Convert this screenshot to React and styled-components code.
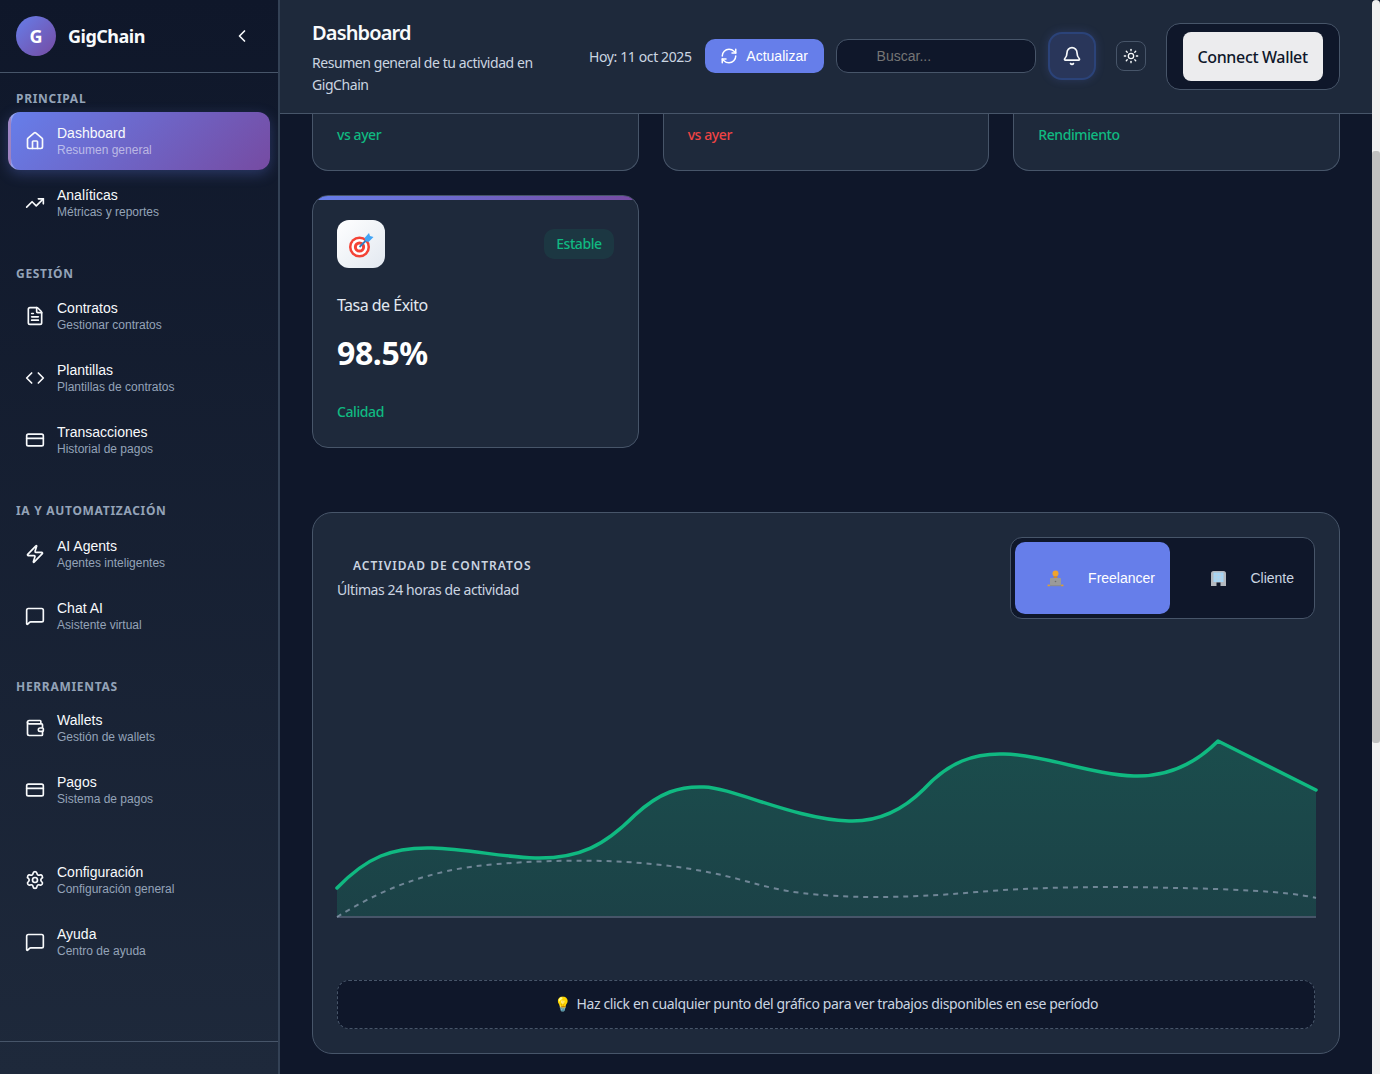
import React from 'react';
import styled, { createGlobalStyle } from 'styled-components';
import {
  ChevronLeft, House, TrendingUp, FileText, Code, CreditCard, Zap, MessageSquare,
  Wallet, Settings, RefreshCw, Bell, Sun,
} from 'lucide-react';

const GlobalStyle = createGlobalStyle`
  html, body { margin: 0; height: 100%; overflow: hidden; background: #0f172a; }
  #root { height: 100%; }
  * { box-sizing: border-box; }
  body { font-family: "Noto Sans", "Open Sans", sans-serif; color: #f8fafc; }
`;

const Shell = styled.div`
  display: grid;
  grid-template-columns: 280px 1fr 8px;
  height: 1074px;
  overflow: hidden;
`;

const Sidebar = styled.aside`
  display: flex;
  flex-direction: column;
  background: linear-gradient(180deg, #0f172a 0%, #1e293b 100%);
  border-right: 2px solid #334155;
  overflow: hidden;
`;

const Brand = styled.div`
  display: flex;
  align-items: center;
  height: 73px;
  flex: none;
  padding: 0 26px 0 16px;
  border-bottom: 1px solid #475569;
`;

const LogoMark = styled.div`
  width: 40px;
  height: 40px;
  border-radius: 50%;
  background: linear-gradient(135deg, #667eea, #764ba2);
  display: flex;
  align-items: center;
  justify-content: center;
  font-size: 18px;
  font-weight: 700;
  color: #fff;
  margin-right: 12px;
`;

const BrandName = styled.div`
  flex: 1;
  font-size: 18px;
  font-weight: 700;
  letter-spacing: -0.5px;
  color: #f8fafc;
`;

const Section = styled.div`
  padding: ${(p) => p.$top}px 8px 0;
`;

const SectionTitle = styled.div`
  padding-left: 8px;
  height: 16px;
  line-height: 16px;
  margin-bottom: ${(p) => p.$gap}px;
  font-size: 12px;
  font-weight: 700;
  letter-spacing: 0.7px;
  color: #94a3b8;
`;

const NavItem = styled.div`
  display: flex;
  align-items: center;
  height: 58px;
  margin-bottom: 4px;
  padding-left: 17px;
  border-radius: 12px;
  font-family: "Liberation Sans", Arial, sans-serif;
  ${(p) => p.$active && `
    background: linear-gradient(135deg, #667eea, #764ba2);
    border-left: 3px solid rgba(255,255,255,0.3);
    padding-left: 14px;
    box-shadow: 0 4px 14px rgba(102,126,234,0.3);
  `}
`;

const NavText = styled.div`
  margin-left: 12px;
  display: flex;
  flex-direction: column;
`;

const NavLabel = styled.span`
  font-size: 14px;
  line-height: 18px;
  color: #f8fafc;
`;

const NavHint = styled.span`
  font-size: 12px;
  line-height: 16px;
  color: ${(p) => (p.$active ? 'rgba(255,255,255,0.55)' : '#94a3b8')};
`;

const SidebarFoot = styled.div`
  margin-top: auto;
  height: 33px;
  flex: none;
  border-top: 1px solid #475569;
`;

const Main = styled.main`
  display: flex;
  flex-direction: column;
  min-width: 0;
  background: #0f172a;
`;

const Header = styled.header`
  display: flex;
  align-items: center;
  height: 114px;
  flex: none;
  padding: 0 32px 1px;
  background: #1e293b;
  border-bottom: 1px solid #475569;
`;

const TitleBlock = styled.div`
  width: 253px;
  margin-right: 24px;
  padding-top: 2px;
  flex: none;
`;

const PageTitle = styled.h1`
  margin: 0 0 6px;
  font-size: 20px;
  line-height: 27px;
  font-weight: 600;
  letter-spacing: -0.85px;
  color: #f8fafc;
`;

const PageSub = styled.p`
  margin: 0;
  font-size: 14px;
  line-height: 22px;
  letter-spacing: -0.44px;
  color: #cbd5e1;
`;

const DateText = styled.span`
  font-size: 14px;
  letter-spacing: -0.38px;
  color: #cbd5e1;
  white-space: nowrap;
  margin-right: 13px;
`;

const RefreshButton = styled.div`
  display: flex;
  align-items: center;
  justify-content: center;
  gap: 8px;
  width: 119px;
  height: 34px;
  border-radius: 10px;
  background: #667eea;
  color: #fff;
  font: 14px "Liberation Sans", Arial, sans-serif;
  margin-right: 12px;
`;

const SearchBox = styled.div`
  display: flex;
  align-items: center;
  width: 200px;
  height: 34px;
  padding-left: 40px;
  border: 1px solid #475569;
  border-radius: 12px;
  background: #0f172a;
  color: #757575;
  font: 14px "Liberation Sans", Arial, sans-serif;
  margin-right: 12px;
`;

const BellButton = styled.div`
  display: flex;
  align-items: center;
  justify-content: center;
  width: 48px;
  height: 48px;
  border-radius: 14px;
  background: #29365a;
  border: 2px solid #2b4379;
  box-shadow: 0 0 10px rgba(102,126,234,0.2);
  margin-right: 20px;
`;

const ThemeButton = styled.div`
  display: flex;
  align-items: center;
  justify-content: center;
  width: 30px;
  height: 30px;
  border-radius: 8px;
  background: #1e293b;
  border: 1px solid #475569;
  margin-right: 20px;
`;

const WalletWrap = styled.div`
  display: flex;
  align-items: center;
  justify-content: center;
  width: 174px;
  height: 67px;
  border-radius: 14px;
  background: #0f172a;
  border: 1px solid #475569;
`;

const WalletButton = styled.div`
  display: flex;
  align-items: center;
  justify-content: center;
  width: 140px;
  height: 49px;
  padding-top: 2px;
  border-radius: 8px;
  background: #ececee;
  color: #0f172a;
  font-size: 16px;
  font-weight: 500;
  letter-spacing: -0.35px;
`;

const Content = styled.div`
  flex: 1;
  padding: 0 32px;
`;

const CardGrid = styled.div`
  display: grid;
  grid-template-columns: repeat(3, 1fr);
  gap: 24px;
`;

const StatsRow = styled(CardGrid)`
  margin-top: 24px;
`;

const ClippedCard = styled.div`
  height: 57px;
  padding: 10px 24px 0;
  background: #1e293b;
  border: 1px solid #475569;
  border-top: 0;
  border-radius: 0 0 16px 16px;
`;

const Trend = styled.div`
  font-size: 14px;
  line-height: 22px;
  font-weight: 500;
  letter-spacing: -0.42px;
  color: ${(p) => (p.$down ? '#ef4444' : '#10b981')};
`;

const StatCard = styled.div`
  position: relative;
  height: 253px;
  padding: 24px;
  background: #1e293b;
  border: 1px solid #475569;
  border-radius: 16px;
  overflow: hidden;
  &::before {
    content: '';
    position: absolute;
    top: 0;
    left: 0;
    right: 0;
    height: 4px;
    background: linear-gradient(90deg, #667eea, #764ba2);
  }
`;

const CardTop = styled.div`
  display: flex;
  align-items: center;
  justify-content: space-between;
  margin-bottom: 26px;
`;

const IconTile = styled.div`
  display: flex;
  align-items: center;
  justify-content: center;
  width: 48px;
  height: 48px;
  border-radius: 12px;
  background: linear-gradient(135deg, #ffffff, #e2e8f0);
`;

const Badge = styled.div`
  height: 30px;
  line-height: 30px;
  padding: 0 12px;
  border-radius: 10px;
  background: rgba(16,185,129,0.1);
  color: #10b981;
  font-size: 14px;
  font-weight: 500;
  letter-spacing: -0.42px;
`;

const StatLabel = styled.div`
  font-size: 16px;
  line-height: 22px;
  letter-spacing: -0.52px;
  color: #e2e8f0;
`;

const StatValue = styled.div`
  margin: 15px 0 26px;
  font-size: 32px;
  line-height: 44px;
  font-weight: 700;
  letter-spacing: -0.4px;
  color: #fff;
`;

const ChartCard = styled.section`
  margin-top: 64px;
  height: 542px;
  padding: 24px;
  background: #1e293b;
  border: 1px solid #475569;
  border-radius: 20px;
`;

const ChartHead = styled.div`
  display: flex;
  justify-content: space-between;
  align-items: flex-start;
`;

const ChartTitle = styled.h2`
  margin: 20px 0 5px 16px;
  font-size: 12px;
  line-height: 18px;
  font-weight: 600;
  letter-spacing: 1px;
  color: #cbd5e1;
`;

const ChartSub = styled.p`
  margin: 0;
  font-size: 14px;
  line-height: 20px;
  letter-spacing: -0.4px;
  color: #cbd5e1;
`;

const Toggle = styled.div`
  display: flex;
  width: 305px;
  height: 82px;
  padding: 4px;
  background: #0f172a;
  border: 1px solid #475569;
  border-radius: 12px;
`;

const ToggleOption = styled.div`
  display: flex;
  align-items: center;
  justify-content: space-between;
  width: ${(p) => (p.$active ? 155 : 140)}px;
  padding: 0 ${(p) => (p.$active ? 15 : 16)}px 0 ${(p) => (p.$active ? 32 : 40)}px;
  border-radius: 10px;
  font: 14px "Liberation Sans", Arial, sans-serif;
  color: ${(p) => (p.$active ? '#fff' : '#cbd5e1')};
  background: ${(p) => (p.$active ? '#667eea' : 'transparent')};
`;

const ChartSvg = styled.svg`
  display: block;
  width: 980px;
  height: 232px;
  margin-top: 98px;
  overflow: visible;
`;

const Hint = styled.div`
  display: flex;
  align-items: center;
  justify-content: center;
  gap: 6px;
  height: 49px;
  margin-top: 31px;
  padding-bottom: 2px;
  background: #0f172a;
  border: 1px dashed #475569;
  border-radius: 12px;
  font-size: 14px;
  letter-spacing: -0.37px;
  color: #cbd5e1;
`;

const ScrollRail = styled.div`
  background: #f1f1f1;
  padding-top: 151px;
  border-radius: 4px 4px 0 0;
`;

const ScrollThumb = styled.div`
  height: 592px;
  background: #c1c1c1;
  border-radius: 3px;
`;

const navIcon = { size: 20, strokeWidth: 2, color: '#f8fafc' };

const nav = [
  {
    title: 'PRINCIPAL',
    top: 18,
    gap: 5,
    items: [
      { icon: House, label: 'Dashboard', hint: 'Resumen general', active: true },
      { icon: TrendingUp, label: 'Analíticas', hint: 'Métricas y reportes' },
    ],
  },
  {
    title: 'GESTIÓN',
    top: 30,
    gap: 5,
    items: [
      { icon: FileText, label: 'Contratos', hint: 'Gestionar contratos' },
      { icon: Code, label: 'Plantillas', hint: 'Plantillas de contratos' },
      { icon: CreditCard, label: 'Transacciones', hint: 'Historial de pagos' },
    ],
  },
  {
    title: 'IA Y AUTOMATIZACIÓN',
    top: 30,
    gap: 6,
    items: [
      { icon: Zap, label: 'AI Agents', hint: 'Agentes inteligentes' },
      { icon: MessageSquare, label: 'Chat AI', hint: 'Asistente virtual' },
    ],
  },
  {
    title: 'HERRAMIENTAS',
    top: 30,
    gap: 4,
    items: [
      { icon: Wallet, label: 'Wallets', hint: 'Gestión de wallets' },
      { icon: CreditCard, label: 'Pagos', hint: 'Sistema de pagos' },
    ],
  },
  {
    top: 28,
    items: [
      { icon: Settings, label: 'Configuración', hint: 'Configuración general' },
      { icon: MessageSquare, label: 'Ayuda', hint: 'Centro de ayuda' },
    ],
  },
];

const linePath = 'M0 171 C30 140 55 130 95 131 C130 132 165 140 198 141 C243 142 268 128 298 98 C323 75 343 69 367 70 C397 71 457 102 512 104 C542 105 567 92 587 72 C612 45 637 36 667 37 C707 38 757 58 797 59 C832 60 860 45 881 24 L979 73';
const dashPath = 'M0 200 C40 175 90 152 160 147 C225 142 305 141 375 156 C410 163 430 172 465 176 C505 181 565 182 640 175 C700 170 770 169 840 171 C890 172 950 174 979 181';

const ActivityChart = () => (
  <ChartSvg viewBox="0 0 980 232">
    <defs>
      <linearGradient id="areaFill" x1="0" y1="0" x2="0" y2="1">
        <stop offset="0%" stopColor="#10b981" stopOpacity="0.25" />
        <stop offset="100%" stopColor="#10b981" stopOpacity="0.17" />
      </linearGradient>
    </defs>
    <path d={`${linePath} L979 200 L0 200 Z`} fill="url(#areaFill)" />
    <line x1="0" y1="200" x2="979" y2="200" stroke="#475569" strokeWidth="2" />
    <path d={dashPath} fill="none" stroke="#94a3b8" strokeOpacity="0.7" strokeWidth="2" strokeDasharray="5 5" />
    <path d={linePath} fill="none" stroke="#10b981" strokeWidth="3.5" strokeLinecap="round" strokeLinejoin="round" />
  </ChartSvg>
);

const TargetIcon = () => (
  <svg width="28" height="28" viewBox="0 0 28 28">
    <circle cx="12.5" cy="17" r="10.5" fill="#f44336" />
    <circle cx="12.5" cy="17" r="8" fill="#fff" />
    <circle cx="12.5" cy="17" r="5.6" fill="#f44336" />
    <circle cx="12.5" cy="17" r="2.6" fill="#fff" />
    <path d="M12.5 17 L21 8.5" stroke="#2f7fc4" strokeWidth="1.8" />
    <path d="M17.5 8 L22 3 L23 6 L26.5 7 L21.5 12 L18.5 11 Z" fill="#42a5f5" />
  </svg>
);

// the two small pictograms in the role switch
const FreelancerIcon = () => (
  <svg width="17" height="17" viewBox="0 0 17 17">
    <circle cx="8.5" cy="3.6" r="3" fill="#f0a32c" />
    <rect x="6.6" y="6.4" width="3.8" height="2" fill="#d98a1e" />
    <rect x="3" y="8" width="11" height="7" rx="0.6" fill="#9a9a9a" />
    <circle cx="8.5" cy="11.5" r="0.8" fill="#6e6e6e" />
    <rect x="1" y="15" width="15" height="1.2" fill="#8d8d8d" />
    <rect x="0.6" y="14.6" width="2.2" height="1.6" fill="#e0a030" />
    <rect x="14.2" y="14.6" width="2.2" height="1.6" fill="#e0a030" />
  </svg>
);

const BuildingIcon = () => (
  <svg width="17" height="17" viewBox="0 0 17 17">
    <path d="M1 16 V3.5 Q1 1 3.5 1 H13.5 Q16 1 16 3.5 V16 H10.5 V12.5 H6.5 V16 Z" fill="#b4b9bf" />
    <rect x="3.5" y="2.5" width="10" height="9.5" fill="#a4d6f7" />
    <path d="M6.8 2.5 V12 M10.2 2.5 V12 M3.5 5.7 H13.5 M3.5 8.9 H13.5" stroke="#c9cdd2" strokeWidth="0.5" />
  </svg>
);

const App = () => (
  <>
    <GlobalStyle />
    <Shell>
      <Sidebar>
        <Brand>
          <LogoMark>G</LogoMark>
          <BrandName>GigChain</BrandName>
          <ChevronLeft size={20} color="#f8fafc" />
        </Brand>
        {nav.map((section, i) => (
          <Section key={i} $top={section.top}>
            {section.title && <SectionTitle $gap={section.gap}>{section.title}</SectionTitle>}
            {section.items.map(({ icon: Icon, label, hint, active }) => (
              <NavItem key={label} $active={active}>
                <Icon {...navIcon} />
                <NavText>
                  <NavLabel>{label}</NavLabel>
                  <NavHint $active={active}>{hint}</NavHint>
                </NavText>
              </NavItem>
            ))}
          </Section>
        ))}
        <SidebarFoot />
      </Sidebar>
      <Main>
        <Header>
          <TitleBlock>
            <PageTitle>Dashboard</PageTitle>
            <PageSub>Resumen general de tu actividad en GigChain</PageSub>
          </TitleBlock>
          <DateText>Hoy: 11 oct 2025</DateText>
          <RefreshButton>
            <RefreshCw size={18} />
            Actualizar
          </RefreshButton>
          <SearchBox>Buscar...</SearchBox>
          <BellButton><Bell size={20} color="#f8fafc" /></BellButton>
          <ThemeButton><Sun size={16} color="#f8fafc" /></ThemeButton>
          <WalletWrap><WalletButton>Connect Wallet</WalletButton></WalletWrap>
        </Header>
        <Content>
          <CardGrid>
            <ClippedCard><Trend>vs ayer</Trend></ClippedCard>
            <ClippedCard><Trend $down>vs ayer</Trend></ClippedCard>
            <ClippedCard><Trend>Rendimiento</Trend></ClippedCard>
          </CardGrid>
          <StatsRow>
            <StatCard>
              <CardTop>
                <IconTile><TargetIcon /></IconTile>
                <Badge>Estable</Badge>
              </CardTop>
              <StatLabel>Tasa de Éxito</StatLabel>
              <StatValue>98.5%</StatValue>
              <Trend>Calidad</Trend>
            </StatCard>
          </StatsRow>
          <ChartCard>
            <ChartHead>
              <div>
                <ChartTitle>ACTIVIDAD DE CONTRATOS</ChartTitle>
                <ChartSub>Últimas 24 horas de actividad</ChartSub>
              </div>
              <Toggle>
                <ToggleOption $active><FreelancerIcon />Freelancer</ToggleOption>
                <ToggleOption><BuildingIcon />Cliente</ToggleOption>
              </Toggle>
            </ChartHead>
            <ActivityChart />
            <Hint><span>💡</span>Haz click en cualquier punto del gráfico para ver trabajos disponibles en ese período</Hint>
          </ChartCard>
        </Content>
      </Main>
      <ScrollRail><ScrollThumb /></ScrollRail>
    </Shell>
  </>
);

export default App;
